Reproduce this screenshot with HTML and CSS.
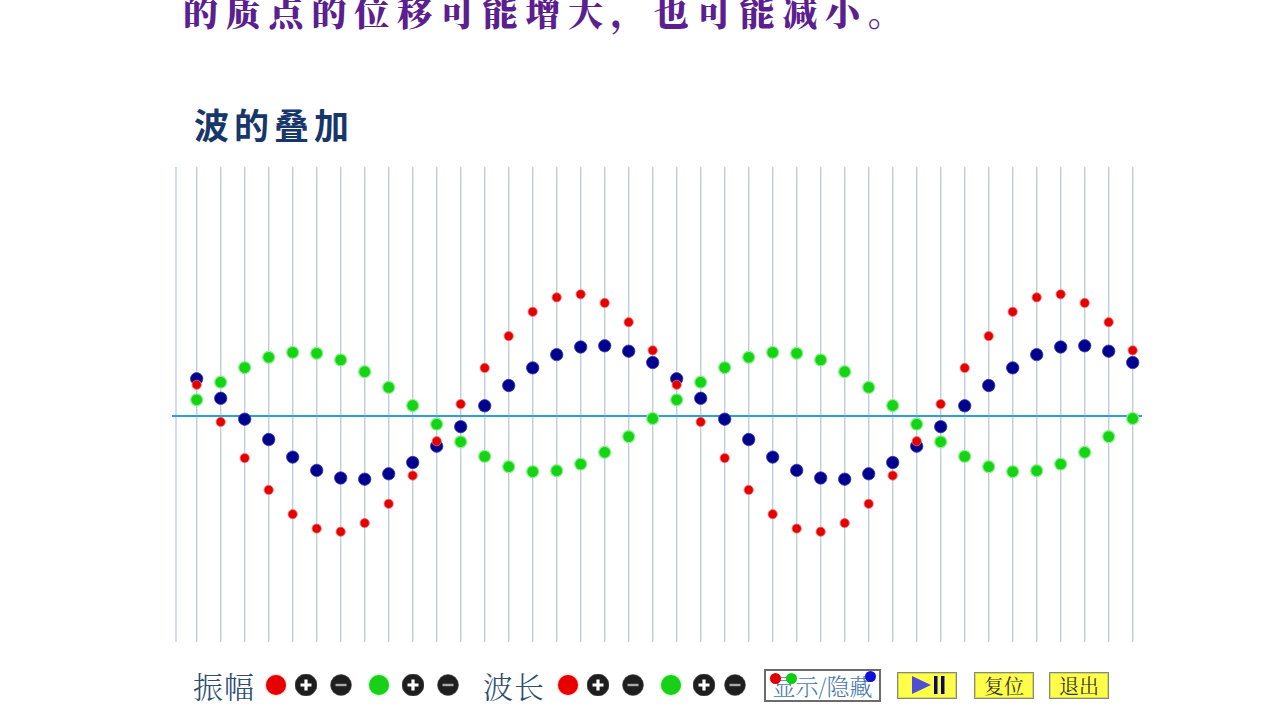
FILE: index.html
```html
<!DOCTYPE html>
<html lang="zh">
<head>
<meta charset="utf-8">
<title>波的叠加</title>
<link rel="stylesheet" href="styles.css">
</head>
<body>
<div class="page">
  <div class="headline">的质点的位移可能增大，也可能减小。</div>
  <h1 class="title">波的叠加</h1>
  <svg class="chart" viewBox="170 165 980 478" width="980" height="478" xmlns="http://www.w3.org/2000/svg">
    <g class="grid"></g>
    <line class="axis" x1="172" y1="415" x2="1142" y2="415"></line>
    <g class="dots"></g>
  </svg>
  <div class="controls">
    <span class="lbl">振幅</span>
    <span class="dot red sp-a"></span>
    <svg class="rbtn sp-b" viewBox="0 0 22 22"><circle class="rb-bg" cx="11" cy="11" r="11"/><path class="rb-plus" d="M11 5.5v11M5.5 11h11"/></svg>
    <svg class="rbtn sp-c" viewBox="0 0 22 22"><circle class="rb-bg" cx="11" cy="11" r="10.5"/><path class="rb-minus" d="M5.5 11h11"/></svg>
    <span class="dot green sp-d"></span>
    <svg class="rbtn sp-c" viewBox="0 0 22 22"><circle class="rb-bg" cx="11" cy="11" r="11"/><path class="rb-plus" d="M11 5.5v11M5.5 11h11"/></svg>
    <svg class="rbtn sp-c" viewBox="0 0 22 22"><circle class="rb-bg" cx="11" cy="11" r="10.5"/><path class="rb-minus" d="M5.5 11h11"/></svg>
    <span class="lbl sp-e">波长</span>
    <span class="dot red sp-c"></span>
    <svg class="rbtn sp-b" viewBox="0 0 22 22"><circle class="rb-bg" cx="11" cy="11" r="11"/><path class="rb-plus" d="M11 5.5v11M5.5 11h11"/></svg>
    <svg class="rbtn sp-c" viewBox="0 0 22 22"><circle class="rb-bg" cx="11" cy="11" r="10.5"/><path class="rb-minus" d="M5.5 11h11"/></svg>
    <span class="dot green sp-d"></span>
    <svg class="rbtn sp-f" viewBox="0 0 22 22"><circle class="rb-bg" cx="11" cy="11" r="11"/><path class="rb-plus" d="M11 5.5v11M5.5 11h11"/></svg>
    <svg class="rbtn sp-b" viewBox="0 0 22 22"><circle class="rb-bg" cx="11" cy="11" r="10.5"/><path class="rb-minus" d="M5.5 11h11"/></svg>
    <button class="toggle sp-g">显示/隐藏<span class="pin pin-r"></span><span class="pin pin-g"></span><span class="pin pin-b"></span></button>
    <button class="ybtn play sp-h"><svg viewBox="0 0 40 22" width="40" height="22"><path class="tri" d="M2 2L21 11L2 20Z"/><rect class="bar" x="24" y="2" width="3.5" height="18"/><rect class="bar" x="31" y="2" width="3.5" height="18"/></svg></button>
    <button class="ybtn sp-i">复位</button>
    <button class="ybtn sp-j">退出</button>
  </div>
</div>
<script src="script.js"></script>
</body>
</html>
```

FILE: styles.css
```css
html, body {
  margin: 0;
  padding: 0;
  background: #ffffff;
}
body {
  width: 1280px;
  height: 720px;
  overflow: hidden;
}
.page {
  display: flex;
  flex-direction: column;
  height: 720px;
}
.headline {
  margin-top: -9px;
  height: 40px;
  line-height: 40px;
  padding-left: 183px;
  font-family: "Noto Serif CJK SC", "Noto Sans CJK SC", sans-serif;
  font-weight: 900;
  font-size: 35px;
  letter-spacing: 7.8px;
  color: #5b1f90;
  white-space: nowrap;
}
.title {
  margin: 73px 0 0 0;
  height: 40px;
  line-height: 40px;
  padding-left: 194px;
  font-family: "Noto Sans CJK SC", sans-serif;
  font-weight: 700;
  font-size: 35px;
  letter-spacing: 5px;
  color: #17366a;
}
.chart {
  display: block;
  margin: 22px 0 0 170px;
}
.grid line {
  stroke: #bccadb;
  stroke-width: 1.3;
}
.axis {
  stroke: #2f9fd4;
  stroke-width: 2;
}
.d-red { fill: #e50000; stroke: #ff6a6a; stroke-width: 0.8; }
.d-blue { fill: #00008f; stroke: #3a3ab0; stroke-width: 0.8; }
.d-green { fill: #14d414; stroke: #8cf08c; stroke-width: 1.2; }

.controls {
  display: flex;
  align-items: center;
  height: 36px;
  margin-top: 23px;
  padding-left: 193px;
}
.lbl {
  font-family: "Noto Serif CJK SC", "Noto Sans CJK SC", serif;
  font-weight: 300;
  font-size: 30px;
  line-height: 36px;
  color: #2f4e70;
  letter-spacing: 1px;
}
.dot {
  width: 20px;
  height: 20px;
  border-radius: 50%;
  flex: none;
}
.dot.red { background: #e80000; box-shadow: 0 0 2px #ff7070; }
.dot.green { background: #18d018; box-shadow: 0 0 3px #80f080; }
.rbtn {
  width: 22px;
  height: 22px;
  flex: none;
}
.rb-bg { fill: #1e1e1e; stroke: #555; stroke-width: 0.6; }
.rb-plus { stroke: #ffffff; stroke-width: 3.2; fill: none; }
.rb-minus { stroke: #a8a8a8; stroke-width: 2.4; fill: none; }

.sp-a { margin-left: 11px; }
.sp-b { margin-left: 9px; }
.sp-c { margin-left: 13px; }
.sp-d { margin-left: 17px; }
.sp-e { margin-left: 24px; }
.sp-f { margin-left: 12px; }
.sp-g { margin-left: 18px; }
.sp-h { margin-left: 16px; }
.sp-i { margin-left: 17px; }
.sp-j { margin-left: 15px; }

.toggle {
  position: relative;
  width: 117px;
  height: 33px;
  padding: 0;
  border: 2px solid #6b6b6b;
  background: #ffffff;
  font-family: "Noto Serif CJK SC", "Noto Sans CJK SC", serif;
  font-weight: 300;
  font-size: 23px;
  line-height: 29px;
  color: #4a78aa;
  text-align: center;
  white-space: nowrap;
}
.pin {
  position: absolute;
  width: 11px;
  height: 11px;
  border-radius: 50%;
  top: 2px;
}
.pin-r { left: 4px; background: #e00000; }
.pin-g { left: 20px; background: #10cc10; }
.pin-b { right: 3px; top: 0; background: #1010d8; }

.ybtn {
  width: 60px;
  height: 27px;
  padding: 0;
  border: 1px solid #8a8a70;
  box-shadow: inset 0 0 0 1px #d8d850;
  background: #ffff4a;
  font-family: "Noto Serif CJK SC", "Noto Sans CJK SC", serif;
  font-weight: 400;
  font-size: 20px;
  line-height: 25px;
  color: #333333;
  text-align: center;
}
.play {
  display: flex;
  align-items: center;
  justify-content: center;
}
.play svg { display: block; margin-left: 6px; }
.tri { fill: #4f4fd6; }
.bar { fill: #0a0a5a; }
```

FILE: script.js
```js
(function () {
  var NS = "http://www.w3.org/2000/svg";
  var grid = document.querySelector(".grid");
  var dots = document.querySelector(".dots");
  var xs = [176];
  for (var k = 0; k < 40; k++) xs.push(196.7 + 24 * k);
  xs.forEach(function (x) {
    var l = document.createElementNS(NS, "line");
    l.setAttribute("x1", x);
    l.setAttribute("x2", x);
    l.setAttribute("y1", 166);
    l.setAttribute("y2", 641);
    grid.appendChild(l);
  });
  var L = 480;
  function red(x) { return 412 + 119 * Math.sin(2 * Math.PI * (x - 215) / L); }
  function green(x) { return 411 + 60 * Math.sin(2 * Math.PI * (x - 421) / L); }
  function blue(x) { return 411.5 + 67 * Math.sin(2 * Math.PI * (x - 237) / L); }
  function add(x, y, r, cls) {
    var c = document.createElementNS(NS, "circle");
    c.setAttribute("cx", x.toFixed(1));
    c.setAttribute("cy", y.toFixed(1));
    c.setAttribute("r", r);
    c.setAttribute("class", cls);
    dots.appendChild(c);
  }
  var pts = xs.slice(1);
  pts.forEach(function (x) { add(x, blue(x), 6.2, "d-blue"); });
  pts.forEach(function (x) { add(x, green(x), 6, "d-green"); });
  pts.forEach(function (x) { add(x, red(x), 4.6, "d-red"); });
})();
```
